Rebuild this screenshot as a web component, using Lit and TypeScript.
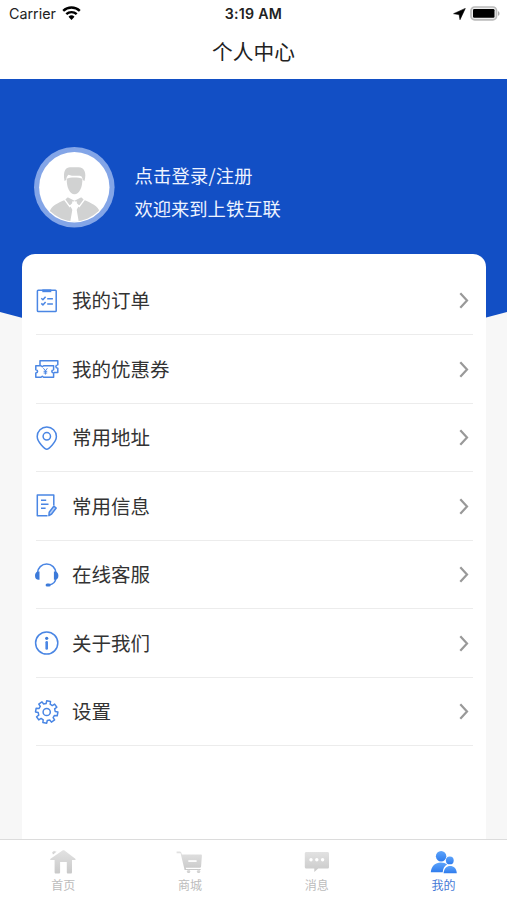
import { LitElement, html, css, svg } from "lit";
import { customElement } from "lit/decorators.js";

// Outline of a cog with eight teeth, centred on (cx, cy).
function cog(cx: number, cy: number, outer: number, inner: number): string {
  const points: string[] = [];
  for (let i = 0; i < 8; i++) {
    const middle = i * 45 + 10;
    for (const [offset, radius] of [[-14, inner], [-10, outer], [10, outer], [14, inner]]) {
      const a = ((middle + offset) * Math.PI) / 180;
      points.push(`${(cx + radius * Math.cos(a)).toFixed(2)} ${(cy + radius * Math.sin(a)).toFixed(2)}`);
    }
  }
  return `M${points.join("L")}z`;
}

const rowIcons: Record<string, unknown> = {
  order: svg`<rect x="3.4" y="2.2" width="18.8" height="21.3" rx="0.8"/><path d="M8.3 2.8h9" stroke-width="2.8"/>
    <path d="M7.3 10.2l1.6 1.5 2.7-3M7.3 15.4l1.6 1.5 2.7-3M13.2 10.7h5.7M13.2 16h5.7"/>`,
  coupon: svg`<path d="M6 9.5V4.800h17.800v4c-2.600.2-2.600 3.200 0 3.500V16.600H20"/>
    <path d="M1.800 9.700h5.200l1.300 1.100 1.300-1.100h10v4c-2.400.3-2.400 3 0 3.300v4.300H9.600l-1.300-1.100L7 21.300H1.800V17c2.400-.3 2.400-3 0-3.300z"/>
    <path d="M9.400 12.200l2 2.600 2-2.600M11.400 14.800v3.800M9.600 15.300h3.600M9.600 17h3.600" stroke-width="1"/>`,
  pin: svg`<path d="M12.800 24.2C11 24.2 3.2 17 3.2 11.500a9.600 9.500 0 0 1 19.200 0C22.400 17 14.600 24.200 12.800 24.200z"/><circle cx="12.800" cy="11.300" r="3.700"/>`,
  form: svg`<path d="M13.500 22.800H3.300V2h16.500v10.500M7 7.200h5.200M7 11.200h7.500M7 15.200h4.600"/>
    <path d="M15.200 19.200l4.600-6 2.400 1.800-4.600 6-2.700 1.600z" fill="#b9d1f7"/>`,
  headset: svg`<path d="M3.200 11.500C3.700 5.800 7.700 2 12.700 2s9 3.800 9.500 9.500M22 16c-.4 4-2.600 6.300-7 6.900"/>
    <path d="M5.500 9.600v8.200C2.600 18.200 1 16.400 1 13.700s1.600-4.500 4.500-4.100zM19.900 9.600v8.200c2.900.4 4.500-1.400 4.500-4.100s-1.600-4.500-4.500-4.100z" fill="#3c7ad9" stroke="none"/>
    <rect x="11.600" y="21.400" width="5" height="3" rx="1.500" fill="#3c7ad9" stroke="none"/>`,
  info: svg`<circle cx="12.700" cy="13" r="11.100"/><circle cx="12.700" cy="8.300" r="1.600" fill="#3c7ad9" stroke="none"/><path d="M12.700 12.200v6.200" stroke-width="2.600" stroke-linecap="round"/>`,
  gear: svg`<path d="${cog(12.7, 13, 11.2, 8.5)}"/><circle cx="12.700" cy="13" r="3.600"/>`,
};

const tabIcons: Record<string, unknown> = {
  home: svg`<path d="M3.200 2.200L5 .8l2.600 1L4 4.500z"/><path d="M13.500.5c.8-.4 1.300-.4 2 0l10.800 8.200c.6.700.2 1.400-.6 1.400H23v12.200c0 .8-.5 1.200-1.200 1.200H19c-.7 0-1.200-.4-1.200-1.200V12h-6.700v10.300c0 .8-.5 1.200-1.200 1.200H6.800c-.7 0-1.200-.4-1.200-1.200V10.100H2c-.8 0-1.100-.7-.5-1.300z"/>`,
  cart: svg`<path d="M.6 1.400h3.200c1.200 0 1.700.8 2.100 3.200h19c.7 0 1.100.5 1 1.200l-.8 10.400c-.1 1-.7 1.500-1.600 1.500H9.700l.4 1.400h14.600v.8H8.600L4.600 3.200H.6z"/><path d="M12.300 10.200h8.300v1.700h-8.300z" fill="#fff"/><circle cx="12.600" cy="21.400" r="1.700"/><circle cx="22.600" cy="21.400" r="1.700"/>`,
  chat: svg`<path d="M3.300 2h21.200c1 0 1.500.6 1.500 1.500v13.400c0 1-.6 1.500-1.500 1.500h-9.300l-3.900 3.700v-3.700h-8c-1 0-1.500-.6-1.500-1.500V3.500C1.800 2.600 2.400 2 3.300 2z"/><g fill="#fff"><circle cx="8" cy="9.800" r="1.700"/><circle cx="13.800" cy="9.800" r="1.700"/><circle cx="19.600" cy="9.800" r="1.700"/></g>`,
  mine: svg`<circle cx="11.100" cy="6.200" r="5.200"/><path d="M.8 22.300c.4-6.300 4.600-9.900 10-9.900 2.700 0 4.800.8 6.300 2.200-2.600 1.500-4.200 4-4.400 7.700z"/><circle cx="19.800" cy="10.400" r="3.900"/><path d="M13.600 23.200c.4-4.700 3-7.200 6.600-7.200s6.200 2.500 6.600 7.200z"/>`,
};

const rows = [
  ["order", "我的订单"],
  ["coupon", "我的优惠券"],
  ["pin", "常用地址"],
  ["form", "常用信息"],
  ["headset", "在线客服"],
  ["info", "关于我们"],
  ["gear", "设置"],
];

const tabs = [
  ["home", "首页"],
  ["cart", "商城"],
  ["chat", "消息"],
  ["mine", "我的"],
];

@customElement("app-root")
export class AppRoot extends LitElement {
  static styles = css`
    :host {
      display: flex;
      flex-direction: column;
      height: 900px;
      overflow: hidden;
      background: #fff;
      color: #333;
      font-family: "Noto Sans CJK SC", sans-serif;
    }
    svg { display: block; flex: none; }
    .status {
      height: 27px;
      display: grid;
      grid-template-columns: 1fr auto 1fr;
      align-items: center;
      padding: 0 6px 0 9px;
      box-sizing: border-box;
      font: 14.300px/27px Inter, sans-serif;
      color: #222;
    }
    .left, .right { display: flex; align-items: center; }
    .left { gap: 6px; }
    .right { justify-content: flex-end; gap: 4px; }
    .time { font-weight: 600; font-size: 14.200px; letter-spacing: 0.250px; margin-right: 3px; }
    .title {
      height: 52px;
      text-align: center;
      font-size: 20.700px;
      line-height: 49px;
      color: #222;
    }
    .main {
      flex: 1;
      min-height: 0;
      display: grid;
      background: #f7f7f7;
    }
    .backdrop, .content { grid-area: 1 / 1; }
    .backdrop {
      height: 300px;
      background: #124fc5;
      clip-path: polygon(0 0, 100% 0, 100% 233px, 50% 300px, 0 233px);
    }
    .content { display: flex; flex-direction: column; z-index: 1; min-height: 0; }
    .profile {
      height: 175px;
      box-sizing: border-box;
      padding: 67.500px 0 0 34px;
      display: flex;
      align-items: flex-start;
      gap: 19.500px;
    }
    .welcome {
      padding-top: 12px;
      color: #eef3ff;
      font-size: 18.300px;
      line-height: 33px;
    }
    .login { letter-spacing: 0.200px; }
    .card {
      flex: 1;
      margin: 0 21px 0 22px;
      padding: 12.500px 13px 0 14px;
      border-radius: 13px 13px 0 0;
      background: #fff;
    }
    .row {
      height: 68.500px;
      box-sizing: border-box;
      border-bottom: 1px solid #ececec;
      display: flex;
      align-items: center;
      font-size: 19.500px;
      line-height: 28px;
    }
    .row .icon {
      margin: 1px 12px 0 -2px;
      fill: none;
      stroke: #4a86e4;
      stroke-width: 1.500;
      stroke-linejoin: round;
    }
    .label { flex: 1; }
    .arrow { margin: 1px 4.500px 0 0; fill: none; stroke: #999; stroke-width: 2.200; }
    .tabs {
      height: 61px;
      box-sizing: border-box;
      border-top: 1px solid #dcdcdc;
      display: grid;
      grid-template-columns: repeat(4, 1fr);
      background: #fff;
    }
    .tab {
      display: flex;
      flex-direction: column;
      align-items: center;
      padding-top: 10px;
      font-size: 12px;
      line-height: 18px;
      color: #bcbcbc;
      fill: url(#gray);
    }
    .tab span { margin-top: 1px; }
    .tab.on { color: #4679d6; fill: url(#blue); }
  `;

  render() {
    return html`
      <div class="status">
        <div class="left">
          <span>Carrier</span>
          <svg width="19" height="15" viewBox="0 0 19 15">
            <g fill="none" stroke="#000" stroke-width="2.400">
              <path d="M1.200 4.800a12 12 0 0 1 16.600 0"/><path d="M4.300 8.200a7.500 7.500 0 0 1 10.400 0"/>
            </g>
            <path d="M6.500 10.700a4.300 4.300 0 0 1 6 0l-3 3.200z"/>
          </svg>
        </div>
        <span class="time">3:19 AM</span>
        <div class="right">
          <svg width="13" height="12" viewBox="0 0 13 12"><path d="M12.300.4L7 11.700 6.100 6.600.6 5.700z" stroke="#000" stroke-width=".6" stroke-linejoin="round"/></svg>
          <svg width="31" height="15" viewBox="0 0 31 15">
            <rect x="1" y="1" width="25.500" height="12.800" rx="3.600" fill="#eee" stroke="#bbb" stroke-width="1.700"/>
            <rect x="3" y="3" width="21.500" height="8.800" rx="1.200"/><path d="M28 5.200c2 .6 2 4 0 4.600z" fill="#aaa"/>
          </svg>
        </div>
      </div>
      <div class="title">个人中心</div>
      <div class="main">
        <div class="backdrop"></div>
        <div class="content">
          <div class="profile">
            <svg width="81" height="81" viewBox="0 0 81 81">
              <defs><clipPath id="face"><circle cx="40.300" cy="40.300" r="34"/></clipPath></defs>
              <circle cx="40.300" cy="40.300" r="40.300" fill="#83a5e7"/>
              <circle cx="40.300" cy="40.300" r="35.200" fill="#fff"/>
              <g clip-path="url(#face)" fill="#d1d2d2">
                <path d="M15.500 81V65c1.500-6 8-9 16.500-12.500L40.500 66l8.500-13.500C57.500 56 64 59 66 65v16z"/>
                <path d="M30.500 34c-2-11 2-14 6-13.700h8c6 .2 8.300 5.700 6 13.700l-1.700-1c-.5-3.500-1.500-4.300-4-4.300-4 .3-7 .2-10.400-1-1.700 1.500-1.900 3-2.200 5.300z"/>
                <path d="M32.800 31.800c3-1.800 12.500-1.500 15.500 0 .5 8-3 15.500-7.800 15.500s-8.200-7.500-7.700-15.500z"/>
                <path d="M33.500 49.500l7 3.500 7-3.500 3 3-5.200 7-4.800-4.500-4.800 4.500-5.200-7z" stroke="#fff" stroke-width="1.300"/>
                <path d="M38 54.500h5L42 59l3 17H36L39 59z" fill="#fff"/>
              </g>
            </svg>
            <div class="welcome"><div class="login">点击登录/注册</div><div>欢迎来到上铁互联</div></div>
          </div>
          <div class="card">
            ${rows.map(([icon, label]) => html`
              <div class="row">
                <svg class="icon" width="26" height="26" viewBox="0 0 26 26">${rowIcons[icon]}</svg>
                <span class="label">${label}</span>
                <svg class="arrow" width="10" height="17" viewBox="0 0 10 17"><path d="M1.300 1.300l6.700 7.200-6.700 7.200"/></svg>
              </div>`)}
          </div>
        </div>
      </div>
      <div class="tabs">
        ${tabs.map(([icon, label]) => html`
          <div class="tab ${icon === "mine" ? "on" : ""}">
            <svg width="28" height="25" viewBox="0 0 28 25">
              <defs>
                <linearGradient id="gray" x1="0" y1="0" x2="0" y2="1"><stop stop-color="#e2e2e2"/><stop offset="1" stop-color="#c9c9c9"/></linearGradient>
                <linearGradient id="blue" x1="0" y1="0" x2="0" y2="1"><stop stop-color="#5da4fb"/><stop offset="1" stop-color="#2f7ced"/></linearGradient>
              </defs>
              ${tabIcons[icon]}
            </svg>
            <span>${label}</span>
          </div>`)}
      </div>
    `;
  }
}
